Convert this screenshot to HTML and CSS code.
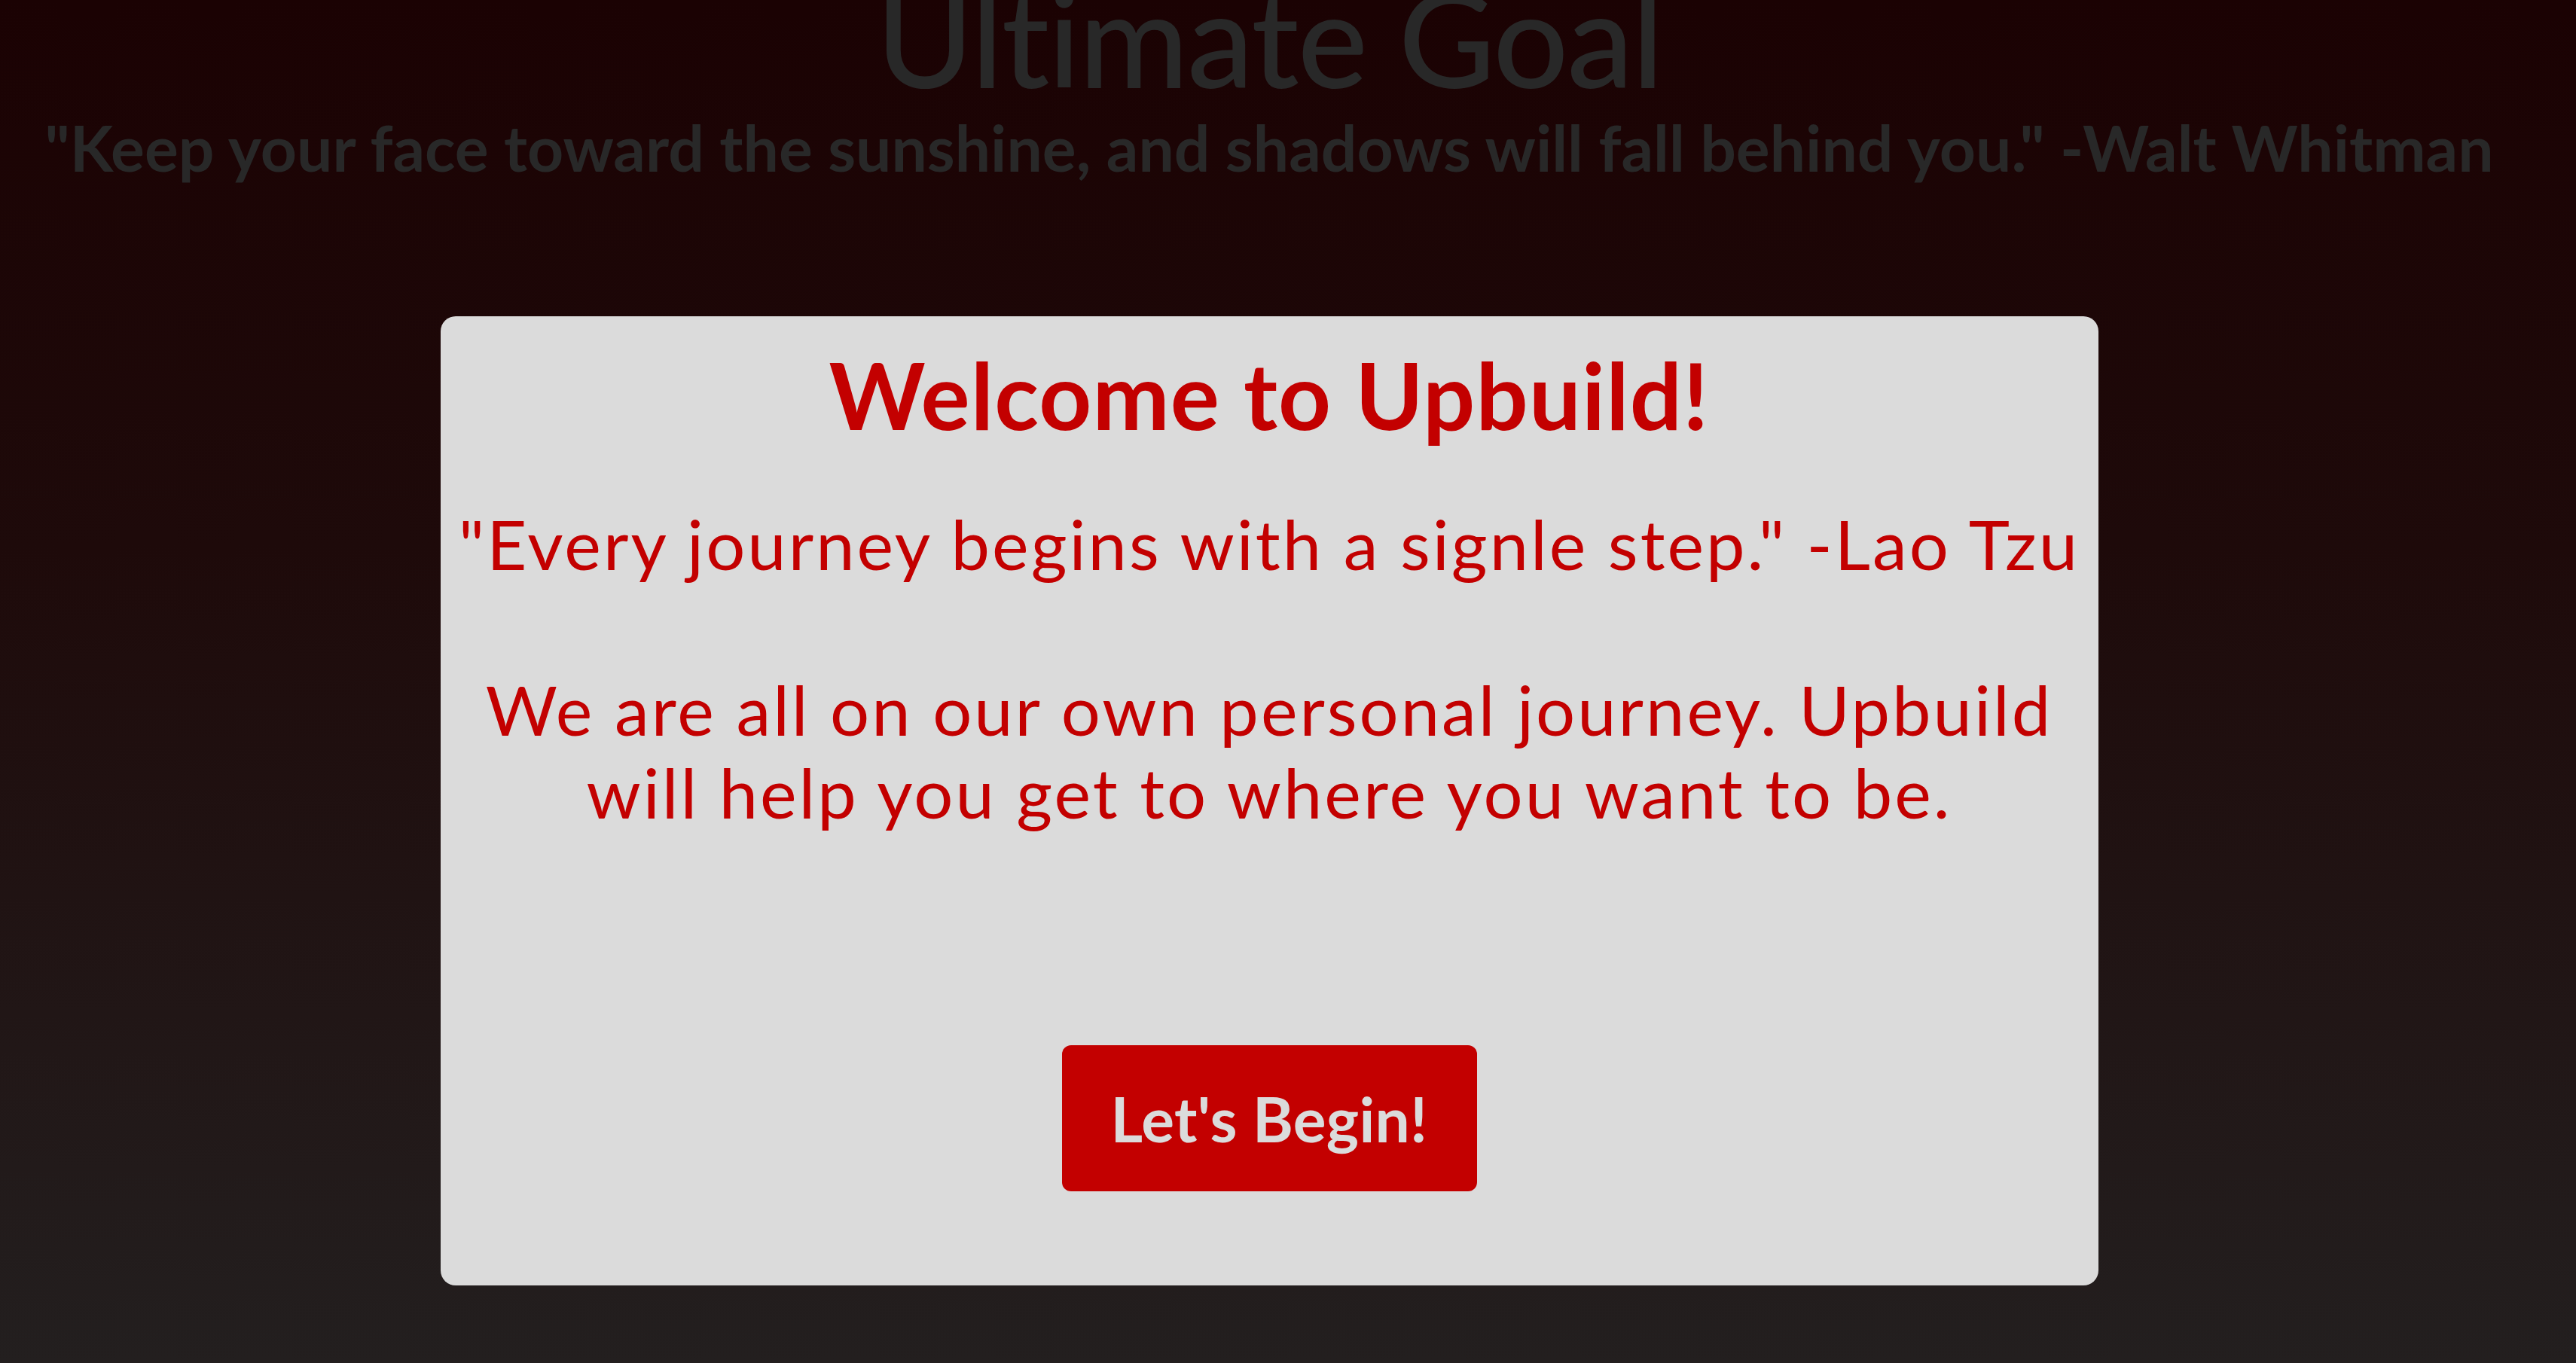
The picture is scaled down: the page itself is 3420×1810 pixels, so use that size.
FILE: index.html
```html
<!DOCTYPE html>
<html lang="en">
<head>
<meta charset="utf-8">
<title>Upbuild</title>
<link rel="stylesheet" href="styles.css">
</head>
<body>
<div class="page">
  <h1 class="goal-title">Ultimate Goal</h1>
  <p class="goal-quote">"Keep your face toward the sunshine, and shadows will fall behind you." -Walt Whitman</p>
  <div class="modal">
    <h2 class="modal-title">Welcome to Upbuild!</h2>
    <p class="modal-text">"Every journey begins with a signle step." -Lao Tzu<br><br>We are all on our own personal journey. Upbuild<br>will help you get to where you want to be.</p>
    <button class="begin-btn" type="button">Let's Begin!</button>
  </div>
</div>
</body>
</html>
```
FILE: styles.css
```css
html, body {
  margin: 0;
  padding: 0;
}
body {
  width: 3420px;
  min-height: 1810px;
  background: linear-gradient(to bottom, #1b0203 0%, #1e0a0a 40%, #231f1f 100%);
  font-family: "Lato", "Open Sans", sans-serif;
  overflow: hidden;
}
.page {
  width: 3370px;
  display: flex;
  flex-direction: column;
  align-items: center;
  text-align: center;
}
.goal-title {
  margin: -39px 0 0;
  font-size: 176px;
  line-height: 176px;
  font-weight: 500;
  letter-spacing: -1.8px;
  color: #282828;
}
.goal-quote {
  margin: 8px 0 0;
  font-size: 84px;
  line-height: 101px;
  font-weight: 700;
  color: #282828;
  white-space: nowrap;
}
.modal {
  margin-top: 174px;
  width: 2201px;
  height: 1287px;
  box-sizing: border-box;
  padding: 31px 20px 0;
  background: #dbdbdb;
  border-radius: 20px;
  display: flex;
  flex-direction: column;
  align-items: center;
}
.modal-title {
  margin: 0;
  font-size: 122px;
  line-height: 146px;
  font-weight: 700;
  letter-spacing: 1.2px;
  color: #c30000;
}
.modal-text {
  margin: 70px 0 0;
  font-size: 92px;
  line-height: 110px;
  font-weight: 400;
  letter-spacing: 3px;
  color: #c30000;
  white-space: nowrap;
}
.begin-btn {
  margin-top: 281px;
  width: 551px;
  height: 194px;
  border: none;
  border-radius: 12px;
  background: #c30000;
  color: #dbdbdb;
  font-family: "Lato", "Open Sans", sans-serif;
  font-size: 82px;
  font-weight: 700;
  letter-spacing: 0.3px;
  display: flex;
  align-items: center;
  justify-content: center;
  padding: 0;
}
```
